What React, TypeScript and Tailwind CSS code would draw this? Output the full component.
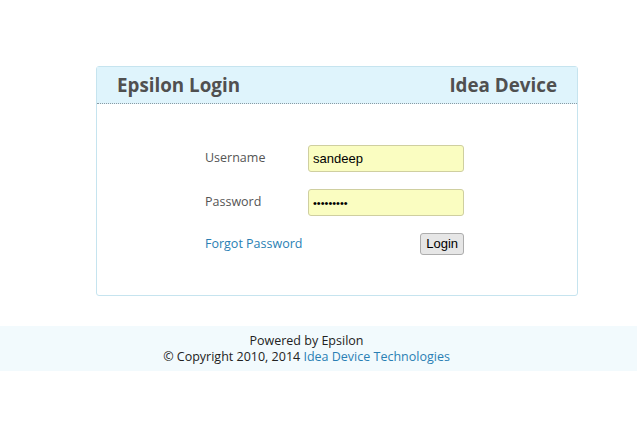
import React, { useState } from 'react';

const App: React.FC = () => {
  const [username, setUsername] = useState('sandeep');
  const [password, setPassword] = useState('123456789');

  return (
    <div className="min-h-screen bg-white pt-[66px] font-['Open_Sans',sans-serif]">
      {/* Login Panel */}
      <div className="ml-[96px] w-[482px] rounded-[3px] border border-[#c6e4ef]">
        <div className="flex h-[37px] items-center justify-between border-b border-dotted border-[#8a9aa3] bg-[#dff4fc] px-[20px] text-[18.8px] font-bold text-[#505050]">
          <span>Epsilon Login</span>
          <span>Idea Device</span>
        </div>

        <div className="pb-[40px] pl-[108px] pt-[41px]">
          <div className="flex w-[259px] flex-col gap-[17px]">
            <div className="flex items-center">
              <label className="w-[103px] text-[12.5px] text-[#555]">Username</label>
              <input
                type="text"
                value={username}
                onChange={e => setUsername(e.target.value)}
                className="h-[27px] w-[156px] rounded-[3px] border border-[#cfcfa0] bg-[#fafdc1] px-[4px] font-['Liberation_Sans',sans-serif] text-[13px] text-black outline-none"
              />
            </div>
            <div className="flex items-center">
              <label className="w-[103px] text-[12.5px] text-[#555]">Password</label>
              <input
                type="password"
                value={password}
                onChange={e => setPassword(e.target.value)}
                className="h-[27px] w-[156px] rounded-[3px] border border-[#cfcfa0] bg-[#fafdc1] px-[4px] font-['Liberation_Sans',sans-serif] text-[11px] text-black outline-none"
              />
            </div>
            <div className="flex items-center justify-between">
              <a href="#" className="text-[12.5px] text-[#2a7fb4]">Forgot Password</a>
              <button className="h-[22px] rounded-[3px] border border-[#adadad] bg-[#e6e6e6] px-[5px] font-['Liberation_Sans',sans-serif] text-[13px] text-black">
                Login
              </button>
            </div>
          </div>
        </div>
      </div>

      {/* Footer */}
      <div className="mt-[30px] flex h-[45px] flex-col justify-center bg-[#f2fafd] text-[12.5px] leading-[16px] text-[#222]">
        <div className="w-[613px] text-center">Powered by Epsilon</div>
        <div className="w-[613px] text-center">
          © Copyright 2010, 2014 <a href="#" className="text-[#2a7fb4]">Idea Device Technologies</a>
        </div>
      </div>
    </div>
  );
};

export default App;
